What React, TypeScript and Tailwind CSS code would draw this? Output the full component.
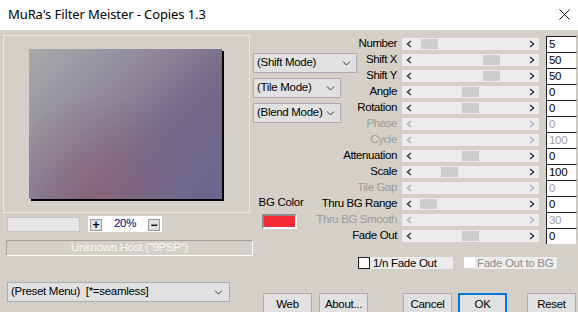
import React from 'react';

type Row = { label: string; value: string; thumb?: number; disabled?: boolean };

const rows: Row[] = [
  { label: 'Number', value: '5', thumb: 19 },
  { label: 'Shift X', value: '50', thumb: 81 },
  { label: 'Shift Y', value: '50', thumb: 81 },
  { label: 'Angle', value: '0', thumb: 60 },
  { label: 'Rotation', value: '0', thumb: 60 },
  { label: 'Phase', value: '0', disabled: true },
  { label: 'Cycle', value: '100', disabled: true },
  { label: 'Attenuation', value: '0', thumb: 60 },
  { label: 'Scale', value: '100', thumb: 39 },
  { label: 'Tile Gap', value: '0', disabled: true },
  { label: 'Thru BG Range', value: '0', thumb: 18 },
  { label: 'Thru BG Smooth', value: '30', disabled: true },
  { label: 'Fade Out', value: '0', thumb: 60 },
];

const Chevron = ({ dir, dim }: { dir: 'l' | 'r' | 'd'; dim?: boolean }) => {
  const d = dir === 'l' ? 'M5 1 L1.5 4 L5 7' : dir === 'r' ? 'M2 1 L5.5 4 L2 7' : 'M1 1.5 L4.5 5 L8 1.5';
  const w = dir === 'd' ? 9 : 7;
  const h = dir === 'd' ? 6 : 8;
  return (
    <svg width={w} height={h} viewBox={`0 0 ${w} ${h}`} className="shrink-0">
      <path d={d} fill="none" stroke={dim ? '#b4b4b4' : '#3c3c3c'} strokeWidth={dir === 'd' ? 1 : 1.6} />
    </svg>
  );
};

const SliderRow = ({ row }: { row: Row }) => (
  <div className="flex items-center h-[16px]">
    <div className={`w-[94px] text-right whitespace-nowrap text-[11.5px] tracking-[-0.4px] leading-none ${row.disabled ? 'text-[#9c9c9c]' : 'text-black'}`}>
      {row.label}
    </div>
    <div className="relative ml-[5px] w-[137px] h-[12px] bg-[#ececec] flex items-center justify-between px-[4px]">
      <Chevron dir="l" dim={row.disabled} />
      <Chevron dir="r" dim={row.disabled} />
      {row.thumb !== undefined && (
        <div className="absolute top-[1px] h-[10px] w-[17px] bg-[#cdcdcd]" style={{ left: row.thumb }} />
      )}
    </div>
    <div className={`ml-[7px] w-[31px] h-[16px] bg-white border-l border-t border-[#202020] border-r border-r-[#c8c8c8] pl-[2px] text-[11.5px] tracking-[-0.3px] leading-[15px] ${row.disabled ? 'text-[#9c9c9c]' : 'text-black'}`}>
      {row.value}
    </div>
  </div>
);

const Dropdown = ({ label, w }: { label: string; w: string }) => (
  <div className={`${w} h-[20px] shrink-0 bg-[#e1e1e1] border border-[#adadad] flex items-center justify-between pl-[3px] pr-[5px] text-[11.5px] tracking-[-0.3px] text-black whitespace-nowrap`}>
    <span>{label}</span>
    <Chevron dir="d" />
  </div>
);

const Button = ({ label, primary }: { label: string; primary?: boolean }) => (
  <div className={`w-[49px] h-[23px] shrink-0 bg-[#e1e1e1] flex items-center justify-center text-[11.5px] tracking-[-0.3px] text-black ${primary ? 'border-2 border-[#0078d7]' : 'border border-[#adadad]'}`}>
    {label}
  </div>
);

export default function App() {
  return (
    <div className="w-[578px] h-[312px] overflow-hidden bg-[#d4d0c8] font-['Liberation_Sans',Arial,sans-serif] select-none">
      {/* title bar */}
      <div className="h-[30px] bg-white flex items-center justify-between pl-[8px] pr-[8px]">
        <span className="text-[13px] text-black font-['Noto_Sans',sans-serif] tracking-[-0.1px]">MuRa's Filter Meister - Copies 1.3</span>
        <svg width="11" height="11" viewBox="0 0 11 11" className="mb-[1px]">
          <path d="M0.5 0.5 L10.5 10.5 M10.5 0.5 L0.5 10.5" stroke="#111" strokeWidth="1" />
        </svg>
      </div>

      {/* top area */}
      <div className="flex h-[226px]">
        {/* preview column */}
        <div className="w-[253px] shrink-0 pl-[3px] pt-[5px] flex flex-col">
          <div className="w-[247px] h-[179px] border border-[#eceae6] pl-[25px] pt-[13px]">
            <div className="w-[193px] h-[150px] shadow-[2px_2px_0_#000] bg-[radial-gradient(ellipse_at_35%_100%,rgba(146,96,114,0.6),rgba(146,96,114,0)_50%),linear-gradient(135deg,#a9a9ac_0%,#8d8699_40%,#766a88_62%,#6b6692_100%)]" />
          </div>
          <div className="flex items-center mt-[3px]">
            <div className="ml-[4px] w-[73px] h-[15px] bg-[#e6e6e6] border border-[#c6c6c6]" />
            <div className="ml-[8px] w-[74px] h-[16px] bg-white flex items-center justify-between px-[2px]">
              <div className="w-[12px] h-[12px] mt-[2px] bg-[#e1e1e1] border border-[#9a9a9a] flex items-center justify-center text-[12px] font-bold leading-none">+</div>
              <span className="text-[11.5px] tracking-[-0.3px] text-[#000080] leading-none">20%</span>
              <div className="w-[12px] h-[12px] mt-[2px] bg-[#e1e1e1] border border-[#9a9a9a] flex items-center justify-center text-[12px] font-bold leading-none">−</div>
            </div>
          </div>
          <div className="mt-[8px] ml-[3px] w-[247px] h-[16px] border-t border-l border-[#a0a0a0] border-b border-r border-b-white border-r-white flex items-center justify-center text-[11.5px] tracking-[-0.3px] text-[#f6f6f6]">
            Unknown Host ("9PSP")
          </div>
        </div>

        {/* mode dropdowns + bg color */}
        <div className="w-[50px] shrink-0 pt-[23px] flex flex-col relative z-10">
          <Dropdown label="(Shift Mode)" w="w-[104px]" />
          <div className="mt-[5px]"><Dropdown label="(Tile Mode)" w="w-[88px]" /></div>
          <div className="mt-[5px]"><Dropdown label="(Blend Mode)" w="w-[88px]" /></div>
          <div className="mt-[74px] w-[56px] text-center text-[11.5px] tracking-[-0.3px] text-black leading-none whitespace-nowrap">BG Color</div>
          <div className="mt-[5px] ml-[9px] w-[35px] h-[15px] bg-[#f42a35] border-2 border-t-[#8a8a8a] border-l-[#8a8a8a] border-b-white border-r-white" />
        </div>

        {/* sliders */}
        <div className="pt-[6px] flex flex-col">
          {rows.map((r) => (
            <SliderRow key={r.label} row={r} />
          ))}
        </div>
      </div>

      {/* bottom area */}
      <div className="flex h-[56px]">
        <div className="w-[253px] shrink-0 pl-[7px] pt-[26px]">
          <div className="w-[223px] h-[20px] bg-[#e1e1e1] border border-[#adadad] flex items-center justify-between pl-[3px] pr-[6px] text-[11.5px] tracking-[-0.3px] text-black whitespace-nowrap">
            <span>(Preset Menu)&nbsp;&nbsp;[*=seamless]</span>
            <Chevron dir="d" />
          </div>
        </div>
        <div className="flex flex-col">
          <div className="flex items-center ml-[105px] mt-[1px] h-[11px]">
            <div className="w-[12px] h-[12px] bg-white border border-[#202020]" />
            <div className="w-[83px] h-[12px] bg-[#ececec] pl-[3px] text-[11.5px] tracking-[-0.3px] leading-[12px] text-black whitespace-nowrap">1/n Fade Out</div>
            <div className="ml-[11px] w-[11px] h-[11px] bg-white" />
            <div className="w-[82px] h-[12px] bg-[#ececec] pl-[2px] text-[11.5px] tracking-[-0.3px] leading-[12px] text-[#8c8c8c] whitespace-nowrap">Fade Out to BG</div>
          </div>
          <div className="flex mt-[25px] ml-[10px]">
            <Button label="Web" />
            <div className="ml-[7px]"><Button label="About..." /></div>
            <div className="ml-[35px]"><Button label="Cancel" /></div>
            <div className="ml-[6px]"><Button label="OK" primary /></div>
            <div className="ml-[20px]"><Button label="Reset" /></div>
          </div>
        </div>
      </div>
    </div>
  );
}
